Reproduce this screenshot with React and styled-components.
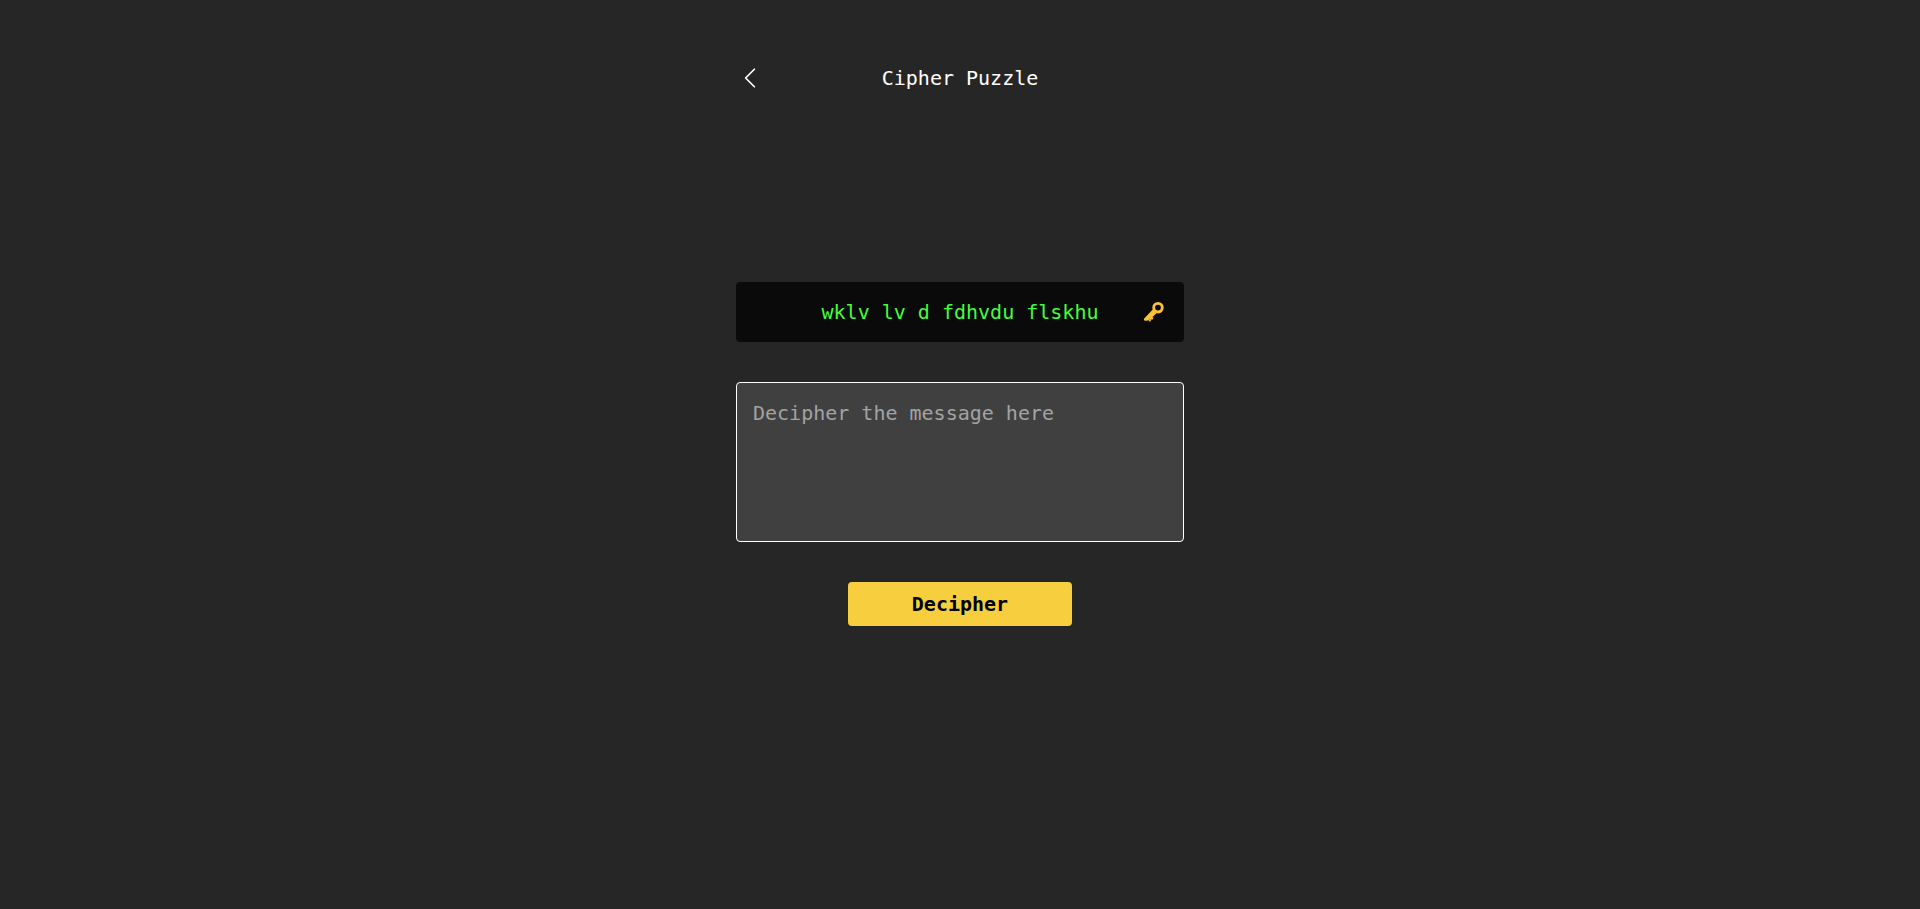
import React, { useState } from "react";
import styled, { createGlobalStyle } from "styled-components";

const GlobalStyle = createGlobalStyle`
  *, *::before, *::after { box-sizing: border-box; }
  body {
    margin: 0;
    background: #262626;
    color: #ffffff;
    font-family: "DejaVu Sans Mono", monospace;
    font-size: 20px;
    line-height: 28px;
  }
`;

const Page = styled.div`
  display: grid;
  grid-template-rows: 1fr auto 1fr;
  justify-items: center;
  min-height: 100vh;
  padding: 64px 16px 65px;
`;

const Header = styled.header`
  display: grid;
  grid-template-columns: 28px 1fr 28px;
  align-self: start;
  width: 100%;
  max-width: 448px;
`;

const BackLink = styled.a`
  display: flex;
  color: inherit;
`;

const Title = styled.h1`
  margin: 0;
  font-size: inherit;
  font-weight: 400;
  text-align: center;
`;

const Form = styled.form`
  display: flex;
  flex-direction: column;
  align-items: center;
  gap: 40px;
  width: 100%;
  max-width: 448px;
`;

const CipherBar = styled.div`
  display: grid;
  grid-template-columns: 28px 1fr 28px;
  align-items: center;
  width: 100%;
  padding: 16px;
  border-radius: 4px;
  background: #0a0a0a;
`;

const CipherText = styled.p`
  margin: 0;
  color: #45ff38;
  text-align: center;
`;

const KeyButton = styled.button`
  display: flex;
  padding: 0;
  border: 0;
  background: none;
  cursor: pointer;
`;

const Answer = styled.textarea`
  display: block;
  width: 100%;
  height: 160px;
  padding: 16px;
  border: 1px solid #ffffff;
  border-radius: 4px;
  background: #404040;
  color: #ffffff;
  font: inherit;
  resize: none;

  &::placeholder {
    color: #a3a3a3;
    opacity: 1;
  }
`;

const SubmitButton = styled.button`
  width: 50%;
  padding: 8px;
  border: 0;
  border-radius: 4px;
  background: #f7ce3e;
  color: #000000;
  font: inherit;
  font-weight: 700;
  cursor: pointer;
`;

function ChevronIcon() {
  return (
    <svg width="28" height="28" viewBox="0 0 24 24" fill="none" stroke="currentColor" strokeWidth="1.5" strokeLinecap="round" strokeLinejoin="round" aria-hidden="true">
      <path d="M15.75 19.5 8.25 12l7.5-7.5" />
    </svg>
  );
}

function KeyIcon() {
  return (
    <svg width="24" height="24" viewBox="0 1 24 24" fill="none" aria-hidden="true">
      <path d="M13.2 10 4.2 19.4q-.6.7-.2 1.5l.8.8h2.4l1-.8 1.3 1.6h1l.6-1.9 1.1.2 1.2-1.2-.8-1.6 4.4-4.2z" fill="#f9c23c" />
      <path d="m8.6 20.3 1.4 1.3.8-1-1.3-1.3zm2.7-2.6 1.6 1.4.7-.9-1.5-1.3z" fill="#e88c32" />
      <path d="m12.2 11.2 3 3 1.3-1.3-2.9-2.9z" fill="#f3a939" />
      <circle cx="18" cy="8.6" r="4.3" stroke="#f9c23c" strokeWidth="2.8" />
      <path d="M14.3 12.4c2 1.9 4.9 2.1 7 .7" stroke="#f3ad38" strokeWidth=".6" />
    </svg>
  );
}

export default function App() {
  const [answer, setAnswer] = useState("");

  return (
    <>
      <GlobalStyle />
      <Page>
        <Header>
          <BackLink href="#" aria-label="Back">
            <ChevronIcon />
          </BackLink>
          <Title>Cipher Puzzle</Title>
        </Header>
        <Form onSubmit={(event) => event.preventDefault()}>
          <CipherBar>
            <span />
            <CipherText>wklv lv d fdhvdu flskhu</CipherText>
            <KeyButton type="button" aria-label="Show key">
              <KeyIcon />
            </KeyButton>
          </CipherBar>
          <Answer
            aria-label="Deciphered message"
            placeholder="Decipher the message here"
            value={answer}
            onChange={(event) => setAnswer(event.target.value)}
          />
          <SubmitButton type="submit">Decipher</SubmitButton>
        </Form>
      </Page>
    </>
  );
}
